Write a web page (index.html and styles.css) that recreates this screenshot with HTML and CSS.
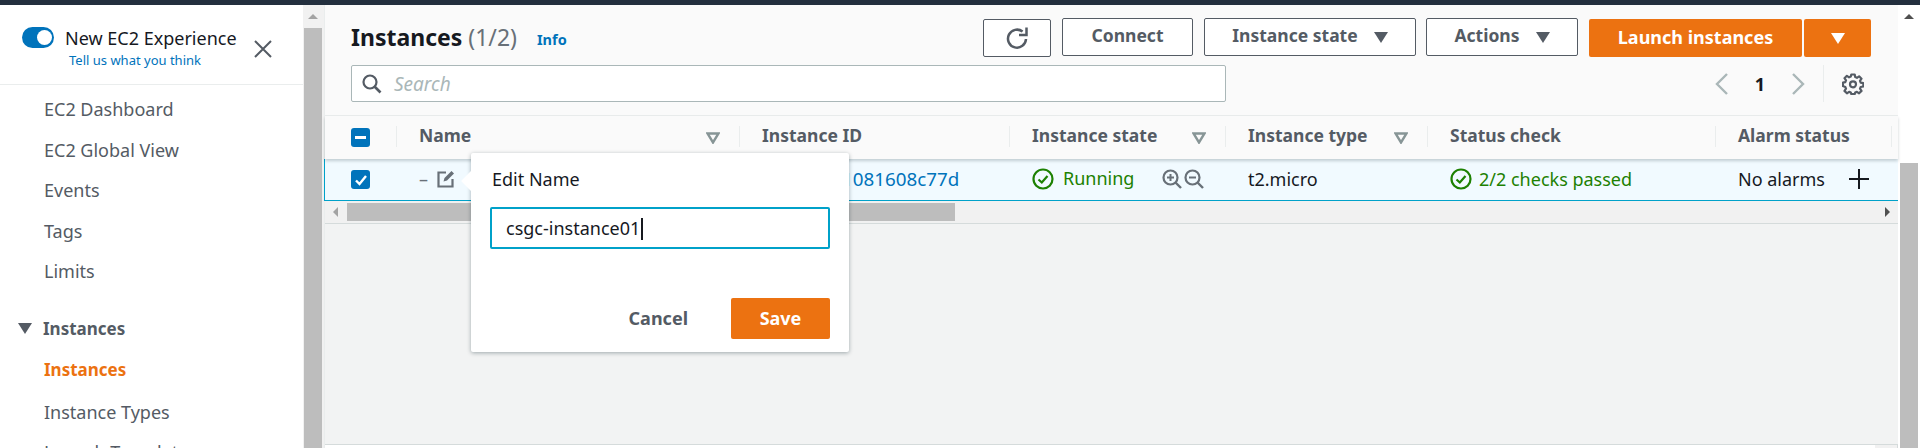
FILE: index.html
```html
<!DOCTYPE html>
<html lang="en">
<head>
  <meta charset="UTF-8">
  <meta name="viewport" content="width=device-width, initial-scale=1.0">
  <title>Instances | EC2 Management Console</title>
  <link rel="stylesheet" href="styles.css">
</head>
<body>
  <div class="topbar"></div>
  <div class="app">

    <div class="sidebar">
      <div class="experience">
        <div class="toggle"><span class="knob"></span></div>
        <div class="exp-text">
          <div class="exp-title">New EC2 Experience</div>
          <a class="exp-link">Tell us what you think</a>
        </div>
        <svg class="exp-close" width="20" height="20" viewBox="0 0 20 20"><path d="M2 2L18 18M18 2L2 18" stroke="#545b64" stroke-width="2" fill="none"/></svg>
      </div>
      <div class="nav">
        <a class="nav-item">EC2 Dashboard</a>
        <a class="nav-item">EC2 Global View</a>
        <a class="nav-item">Events</a>
        <a class="nav-item">Tags</a>
        <a class="nav-item">Limits</a>
        <div class="nav-group"><span class="caret"></span>Instances</div>
        <a class="nav-item active">Instances</a>
        <a class="nav-item types">Instance Types</a>
        <a class="nav-item">Launch Templates</a>
      </div>
    </div>

    <div class="vscroll">
      <span class="arrow-up"></span>
      <div class="vthumb side-thumb"></div>
    </div>

    <div class="main">
      <div class="panel-head">
        <div class="head-row">
          <h1 class="title">Instances <span class="count">(1/2)</span></h1>
          <a class="info">Info</a>
          <div class="actions">
            <button class="btn btn-refresh">
              <svg width="24" height="24" viewBox="0 0 24 24"><path d="M21 13a9 9 0 1 1-3.400-7.400" stroke="#545b64" stroke-width="2.500" fill="none"/><path d="M21.500 1.500v7.500h-7.500" stroke="#545b64" stroke-width="2.500" fill="none"/></svg>
            </button>
            <button class="btn btn-connect">Connect</button>
            <button class="btn btn-state">Instance state<span class="btn-caret"></span></button>
            <button class="btn btn-actions">Actions<span class="btn-caret"></span></button>
            <button class="btn-primary btn-launch">Launch instances</button>
            <button class="btn-primary btn-more"><span class="btn-caret white"></span></button>
          </div>
        </div>
        <div class="search-row">
          <div class="search">
            <svg width="20" height="20" viewBox="0 0 20 20"><circle cx="8" cy="8" r="6.500" stroke="#545b64" stroke-width="2.200" fill="none"/><path d="M12.500 12.500L18.500 18.500" stroke="#545b64" stroke-width="2.600"/></svg>
            <span class="placeholder">Search</span>
          </div>
          <div class="pager">
            <svg width="14" height="22" viewBox="0 0 14 22"><path d="M12 1L2 11L12 21" stroke="#aab7b8" stroke-width="2.400" fill="none"/></svg>
            <span class="page-num">1</span>
            <svg width="14" height="22" viewBox="0 0 14 22"><path d="M2 1L12 11L2 21" stroke="#aab7b8" stroke-width="2.400" fill="none"/></svg>
          </div>
          <div class="settings">
            <svg width="22" height="22" viewBox="0 0 22 22"><path d="M9.300 1.500h3.400l.5 2.600 1.700.7 2.200-1.500 2.400 2.400-1.500 2.200.7 1.700 2.600.5v3.400l-2.600.5-.7 1.700 1.500 2.200-2.400 2.400-2.200-1.500-1.700.7-.5 1.600H9.300l-.5-1.600-1.700-.7-2.200 1.500-2.400-2.400 1.500-2.200-.7-1.700L.9 13V9.600l2.400-.5.7-1.700-1.500-2.200 2.400-2.400 2.200 1.500 1.700-.7z" stroke="#545b64" stroke-width="2.200" fill="none" stroke-linejoin="round"/><circle cx="11" cy="11.300" r="3" stroke="#545b64" stroke-width="2.200" fill="none"/></svg>
          </div>
        </div>
      </div>

      <div class="table-head cols">
        <div class="cell check-cell"><span class="checkbox"><span class="dash"></span></span></div>
        <div class="cell th">Name<svg class="filter" width="14" height="12" viewBox="0 0 14 12"><path d="M1.500 1.500h11L7 10.500z" stroke="#879596" stroke-width="2.400" fill="none"/></svg></div>
        <div class="cell th">Instance ID</div>
        <div class="cell th">Instance state<svg class="filter" width="14" height="12" viewBox="0 0 14 12"><path d="M1.500 1.500h11L7 10.500z" stroke="#879596" stroke-width="2.400" fill="none"/></svg></div>
        <div class="cell th">Instance type<svg class="filter" width="14" height="12" viewBox="0 0 14 12"><path d="M1.500 1.500h11L7 10.500z" stroke="#879596" stroke-width="2.400" fill="none"/></svg></div>
        <div class="cell th">Status check</div>
        <div class="cell th">Alarm status</div>
        <div class="cell th"></div>
      </div>

      <div class="table-row cols">
        <div class="cell check-cell">
          <span class="checkbox"><svg width="14" height="14" viewBox="0 0 14 14"><path d="M2 7.500L5.500 11L12 3" stroke="#fff" stroke-width="2.400" fill="none"/></svg></span>
        </div>
        <div class="cell td name-cell">
          <span class="dash-text">–</span>
          <svg width="18" height="18" viewBox="0 0 18 18"><path d="M9 2.500H1.500v14h14V9" stroke="#687078" stroke-width="2.200" fill="none"/><path d="M6.500 11.500l1-3.500 7-7 2.500 2.500-7 7z" fill="#687078"/></svg>
        </div>
        <div class="cell td"><a class="id-link">i-0e5c2f91081608c77d</a></div>
        <div class="cell td state-cell">
          <svg class="ok" width="22" height="22" viewBox="0 0 22 22"><circle cx="11" cy="11" r="9.500" stroke="#1d8102" stroke-width="2.200" fill="none"/><path d="M6.500 11.500L9.800 14.500L15.500 8" stroke="#1d8102" stroke-width="2.200" fill="none"/></svg>
          <span class="running">Running</span>
          <span class="zooms">
            <svg width="20" height="20" viewBox="0 0 20 20"><circle cx="8.500" cy="8.500" r="7" stroke="#687078" stroke-width="2.200" fill="none"/><path d="M5 8.500h7M8.500 5v7" stroke="#687078" stroke-width="2"/><path d="M13.500 13.500L19 19" stroke="#687078" stroke-width="2.400"/></svg>
            <svg width="20" height="20" viewBox="0 0 20 20"><circle cx="8.500" cy="8.500" r="7" stroke="#687078" stroke-width="2.200" fill="none"/><path d="M5 8.500h7" stroke="#687078" stroke-width="2"/><path d="M13.500 13.500L19 19" stroke="#687078" stroke-width="2.400"/></svg>
          </span>
        </div>
        <div class="cell td">t2.micro</div>
        <div class="cell td status-cell">
          <svg class="ok" width="22" height="22" viewBox="0 0 22 22"><circle cx="11" cy="11" r="9.500" stroke="#1d8102" stroke-width="2.200" fill="none"/><path d="M6.500 11.500L9.800 14.500L15.500 8" stroke="#1d8102" stroke-width="2.200" fill="none"/></svg>
          <span class="passed">2/2 checks passed</span>
        </div>
        <div class="cell td alarm-cell">
          <span>No alarms</span>
          <svg class="plus" width="20" height="20" viewBox="0 0 20 20"><path d="M0 10h20M10 0v20" stroke="#16191f" stroke-width="2"/></svg>
        </div>
        <div class="cell td"></div>
      </div>

      <div class="hscroll">
        <span class="arrow-left"></span>
        <div class="hthumb"></div>
        <span class="arrow-right"></span>
      </div>

      <div class="empty"></div>
      <div class="bottom"><div class="bottom-track"></div></div>

      <div class="popover">
        <span class="pop-arrow"></span>
        <div class="pop-title">Edit Name</div>
        <div class="pop-input">csgc-instance01<span class="cursor"></span></div>
        <div class="pop-foot">
          <a class="pop-cancel">Cancel</a>
          <button class="btn-primary pop-save">Save</button>
        </div>
      </div>
    </div>

    <div class="vscroll right">
      <span class="arrow-up"></span>
      <div class="vthumb main-thumb"></div>
    </div>
  </div>
</body>
</html>
```

FILE: styles.css
```css
* {
  box-sizing: border-box;
}
html, body {
  height: 100%;
}
body {
  margin: 0;
  overflow: hidden;
  background: #fff;
  font-family: "Noto Sans", sans-serif;
  font-size: 18px;
  color: #16191f;
}
a {
  text-decoration: none;
  cursor: pointer;
}
button {
  font-family: inherit;
  cursor: pointer;
}

.topbar {
  height: 5px;
  background: #232f3e;
}
.app {
  display: flex;
  height: 443px;
}

/* left nav */
.sidebar {
  width: 303px;
  flex: none;
  overflow: hidden;
  background: #fff;
}
.experience {
  display: flex;
  height: 80px;
  padding: 22px 0 0 22px;
  border-bottom: 1px solid #eaeded;
}
.toggle {
  width: 32px;
  height: 21px;
  border-radius: 11px;
  background: #0073bb;
  position: relative;
  flex: none;
}
.knob {
  position: absolute;
  right: 2px;
  top: 3px;
  width: 15px;
  height: 15px;
  border-radius: 50%;
  background: #fff;
}
.exp-text {
  margin-left: 11px;
  width: 180px;
}
.exp-title {
  font-size: 18px;
  line-height: 22px;
  white-space: nowrap;
}
.exp-link {
  display: block;
  margin: 1px 0 0 4px;
  font-size: 13px;
  line-height: 20px;
  color: #0073bb;
}
.exp-close {
  margin: 12px 0 0 8px;
}
.nav {
  padding-top: 4px;
}
.nav-item {
  display: block;
  height: 40.500px;
  line-height: 40px;
  padding-left: 44px;
  color: #545b64;
  white-space: nowrap;
}
.nav-item.active {
  margin-top: 1px;
  color: #ec7211;
  font-size: 17px;
  font-weight: 700;
}
.nav-item.types {
  margin-top: 1px;
}
.nav-group {
  display: flex;
  align-items: center;
  height: 40.500px;
  margin-top: 17px;
  padding-left: 18px;
  font-size: 17px;
  font-weight: 700;
  color: #545b64;
}
.caret {
  width: 0;
  height: 0;
  margin-right: 11px;
  border-left: 7px solid transparent;
  border-right: 7px solid transparent;
  border-top: 11px solid #545b64;
}

/* scrollbars */
.vscroll {
  width: 21px;
  flex: none;
  background: #f1f1f1;
  padding: 9px 2px 0 1px;
  display: flex;
  flex-direction: column;
  align-items: center;
}
.vscroll.right {
  width: 22px;
  padding: 9px 2px 0 2px;
  background: #fff;
}
.arrow-up {
  flex: none;
  width: 0;
  height: 0;
  border-left: 5px solid transparent;
  border-right: 5px solid transparent;
  border-bottom: 5px solid #a3a3a3;
}
.right .arrow-up {
  border-bottom-color: #505050;
}
.vthumb {
  width: 100%;
  flex: 1;
  background: #bdbdbd;
}
.side-thumb {
  margin-top: 9px;
}
.main-thumb {
  margin-top: 144px;
}

/* main */
.main {
  flex: 1;
  min-width: 0;
  position: relative;
  display: flex;
  flex-direction: column;
  background: #f2f3f3;
  border-left: 1px solid #eaeded;
}
.panel-head {
  height: 111px;
  padding: 13px 0 0 26px;
  background: #fafafa;
  border-bottom: 1px solid #eaeded;
}
.head-row {
  display: flex;
  align-items: flex-start;
  height: 47px;
}
.title {
  margin: 0;
  font-size: 23px;
  line-height: 38px;
  font-weight: 700;
  color: #16191f;
}
.count {
  font-weight: 400;
  color: #687078;
}
.info {
  margin: 11px 0 0 20px;
  font-size: 14.500px;
  line-height: 20px;
  font-weight: 700;
  color: #0073bb;
}
.actions {
  margin-left: auto;
  margin-right: 27px;
  display: flex;
  align-items: flex-start;
}
.btn {
  height: 38px;
  border: 1px solid #545b64;
  border-radius: 2px;
  background: #fff;
  color: #545b64;
  font-size: 17.500px;
  font-weight: 700;
  display: flex;
  align-items: center;
  justify-content: center;
  padding: 0 0 4px;
}
.btn-refresh {
  width: 68px;
  margin: 1px 11px 0 0;
  padding: 0;
}
.btn-connect {
  width: 131px;
  margin-right: 11px;
}
.btn-state {
  width: 212px;
  margin-right: 10px;
}
.btn-actions {
  width: 152px;
  margin-right: 11px;
}
.btn-caret {
  display: inline-block;
  width: 0;
  height: 0;
  margin: 4px 0 0 16px;
  border-left: 7px solid transparent;
  border-right: 7px solid transparent;
  border-top: 11px solid #545b64;
}
.btn-caret.white {
  margin: 0;
  border-top-color: #fff;
}
.btn-primary {
  height: 38px;
  margin-top: 1px;
  border: 0;
  border-radius: 2px;
  background: #ec7211;
  color: #fff;
  font-size: 18px;
  font-weight: 700;
  padding: 0 0 2px;
}
.btn-launch {
  width: 213px;
  margin-right: 2px;
}
.btn-more {
  width: 67px;
}

.search-row {
  display: flex;
  align-items: center;
  height: 37px;
}
.search {
  width: 875px;
  height: 37px;
  display: flex;
  align-items: center;
  padding-left: 10px;
  background: #fff;
  border: 1px solid #aab7b8;
  border-radius: 2px;
}
.placeholder {
  margin-left: 12px;
  font-size: 19px;
  font-style: italic;
  color: #aab7b8;
}
.pager {
  margin-left: auto;
  display: flex;
  align-items: center;
}
.page-num {
  width: 62px;
  text-align: center;
  font-weight: 700;
}
.settings {
  margin: 0 34px 0 18px;
  padding-left: 18px;
  height: 37px;
  display: flex;
  align-items: center;
  border-left: 1px solid #eaeded;
}

/* table */
.cols {
  display: grid;
  grid-template-columns: 71px 343px 270px 216px 202px 288px 176px 7px;
}
.table-head {
  height: 43px;
  background: #fafafa;
  box-shadow: 0 2px 3px rgba(0, 28, 36, .2);
  position: relative;
}
.cell {
  display: flex;
  align-items: center;
  min-width: 0;
  white-space: nowrap;
}
.th {
  height: 21px;
  margin: 10px 0 12px;
  padding: 0 19px 3px 22px;
  border-left: 1px solid #eaeded;
  font-size: 17.500px;
  line-height: 18px;
  font-weight: 700;
  color: #545b64;
}
.filter {
  margin: 5px 0 0 auto;
}
.check-cell {
  padding-left: 26px;
}
.table-head .check-cell {
  padding-bottom: 1px;
}
.checkbox {
  width: 19px;
  height: 19px;
  border-radius: 3px;
  background: #0073bb;
  display: flex;
  align-items: center;
  justify-content: center;
}
.dash {
  width: 11px;
  height: 3px;
  background: #fff;
}
.table-row {
  height: 42px;
  background: #f1faff;
  border-bottom: 1px solid #00a1c9;
  border-left: 1px solid #00a1c9;
  margin-left: -1px;
}
.td {
  padding-left: 23px;
  padding-bottom: 1px;
}
.dash-text {
  margin-right: 9px;
  color: #687078;
}
.id-link {
  font-size: 18.800px;
  color: #0073bb;
}
.running {
  margin: -3px 0 0 9px;
  color: #1d8102;
}
.zooms {
  margin-left: 28px;
  display: flex;
  gap: 2px;
}
.passed {
  margin-left: 7px;
  color: #1d8102;
}
.alarm-cell .plus {
  margin-left: 24px;
}

.hscroll {
  height: 23px;
  flex: none;
  display: flex;
  align-items: center;
  padding: 0 8px;
  background: #f1f1f1;
  border-bottom: 1px solid #d5dbdb;
}
.hthumb {
  margin-left: 9px;
  width: 608px;
  height: 18px;
  background: #bdbdbd;
}
.arrow-left {
  width: 0;
  height: 0;
  border-top: 5px solid transparent;
  border-bottom: 5px solid transparent;
  border-right: 5px solid #a3a3a3;
}
.arrow-right {
  margin-left: auto;
  width: 0;
  height: 0;
  border-top: 5px solid transparent;
  border-bottom: 5px solid transparent;
  border-left: 5px solid #505050;
}
.empty {
  flex: 1;
}
.bottom {
  height: 4px;
  flex: none;
  display: flex;
  justify-content: flex-end;
  background: #fff;
  border-top: 1px solid #d5dbdb;
}
.bottom-track {
  width: 23px;
  background: #f1f1f1;
  border-right: 1px solid #d5dbdb;
}

/* edit popover */
.popover {
  position: absolute;
  left: 146px;
  top: 148px;
  width: 378px;
  height: 199px;
  padding: 14px 19px 0 21px;
  background: #fff;
  border-radius: 2px;
  box-shadow: 0 1px 4px rgba(0, 28, 36, .35);
}
.pop-arrow {
  position: absolute;
  left: -7px;
  top: 21px;
  width: 14px;
  height: 14px;
  background: #fff;
  transform: rotate(45deg);
}
.pop-title {
  line-height: 24px;
}
.pop-input {
  position: relative;
  margin: 16px 0 0 -2px;
  height: 42px;
  padding-left: 14px;
  line-height: 38px;
  border: 2px solid #00a1c9;
  border-radius: 2px;
}
.cursor {
  display: inline-block;
  width: 2px;
  height: 22px;
  margin-left: 1px;
  background: #16191f;
  vertical-align: -5px;
}
.pop-foot {
  margin-top: 49px;
  display: flex;
  align-items: center;
  justify-content: flex-end;
}
.pop-cancel {
  font-weight: 700;
  color: #545b64;
  margin: -2px 43px 0 0;
}
.pop-save {
  width: 99px;
  height: 41px;
  margin: 0;
}
```
